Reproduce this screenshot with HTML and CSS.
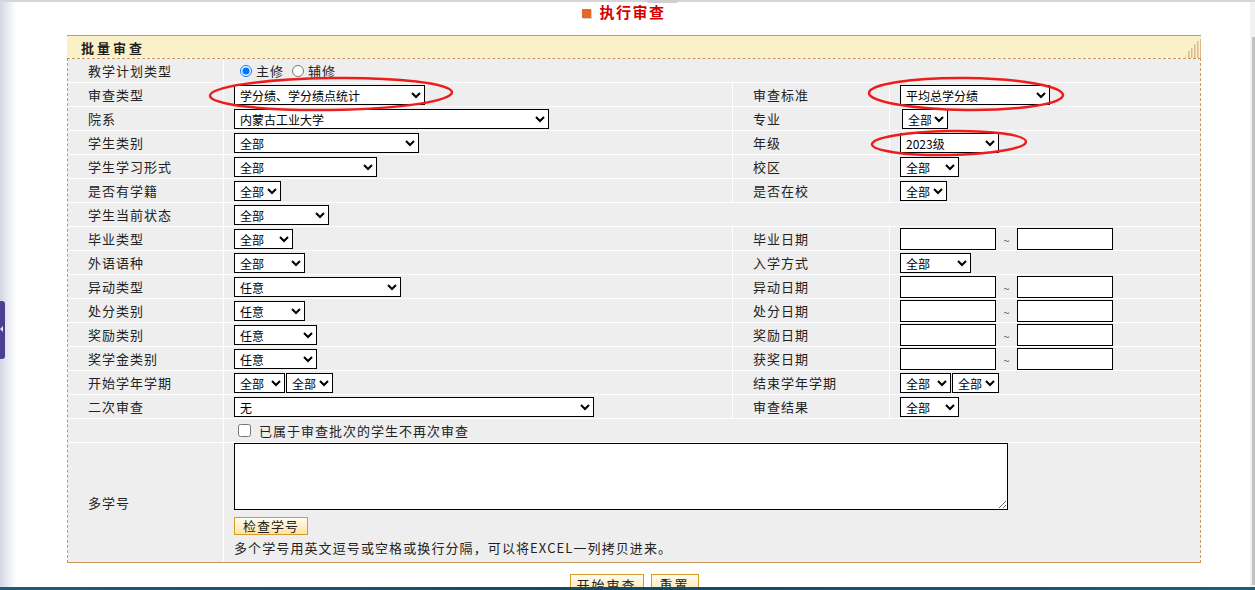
FILE: index.html
```html
<!DOCTYPE html>
<html lang="zh-CN">
<head>
<meta charset="utf-8">
<title>执行审查</title>
<link rel="stylesheet" href="styles.css">
</head>
<body>
<div class="topline"><span class="toptab"></span></div>
<div class="page">
  <div class="title"><span class="title-icon"></span><span class="title-text">执行审查</span></div>
  <div class="panel">
    <div class="panel-head">
      <span class="head-text">批量审查</span>
      <svg class="bars" width="17" height="19" viewBox="0 0 17 19">
        <rect x="1" y="16" width="1" height="3" fill="#efd9b0"/>
        <rect x="4" y="12" width="1.5" height="7" fill="#dcb98a"/>
        <rect x="7" y="9" width="1.5" height="10" fill="#dcb98a"/>
        <rect x="10" y="5" width="1.5" height="14" fill="#dcb98a"/>
        <rect x="13" y="2" width="1.5" height="17" fill="#dcb98a"/>
        <rect x="16" y="0" width="1" height="19" fill="#dcb98a"/>
      </svg>
    </div>
    <div class="panel-body">
      <div class="grid">
        <div class="lab">教学计划类型</div>
        <div class="val span3">
          <label class="opt"><input type="radio" name="plan" checked>主修</label>
          <label class="opt"><input type="radio" name="plan">辅修</label>
        </div>

        <div class="lab">审查类型</div>
        <div class="val"><select class="w191"><option>学分绩、学分绩点统计</option></select></div>
        <div class="lab">审查标准</div>
        <div class="val"><select class="w150"><option>平均总学分绩</option></select></div>

        <div class="lab">院系</div>
        <div class="val"><select class="w315"><option>内蒙古工业大学</option></select></div>
        <div class="lab">专业</div>
        <div class="val"><select class="w46 nudge"><option>全部</option></select></div>

        <div class="lab">学生类别</div>
        <div class="val"><select class="w185"><option>全部</option></select></div>
        <div class="lab">年级</div>
        <div class="val"><select class="w99"><option>2023级</option></select></div>

        <div class="lab">学生学习形式</div>
        <div class="val"><select class="w143"><option>全部</option></select></div>
        <div class="lab">校区</div>
        <div class="val"><select class="w59"><option>全部</option></select></div>

        <div class="lab">是否有学籍</div>
        <div class="val"><select class="w47"><option>全部</option></select></div>
        <div class="lab">是否在校</div>
        <div class="val"><select class="w47"><option>全部</option></select></div>

        <div class="lab">学生当前状态</div>
        <div class="val span3"><select class="w95"><option>全部</option></select></div>

        <div class="lab">毕业类型</div>
        <div class="val"><select class="w59"><option>全部</option></select></div>
        <div class="lab">毕业日期</div>
        <div class="val"><input class="date" type="text"><span class="tilde">~</span><input class="date" type="text"></div>

        <div class="lab">外语语种</div>
        <div class="val"><select class="w71"><option>全部</option></select></div>
        <div class="lab">入学方式</div>
        <div class="val"><select class="w71"><option>全部</option></select></div>

        <div class="lab">异动类型</div>
        <div class="val"><select class="w167"><option>任意</option></select></div>
        <div class="lab">异动日期</div>
        <div class="val"><input class="date" type="text"><span class="tilde">~</span><input class="date" type="text"></div>

        <div class="lab">处分类别</div>
        <div class="val"><select class="w71"><option>任意</option></select></div>
        <div class="lab">处分日期</div>
        <div class="val"><input class="date" type="text"><span class="tilde">~</span><input class="date" type="text"></div>

        <div class="lab">奖励类别</div>
        <div class="val"><select class="w83"><option>任意</option></select></div>
        <div class="lab">奖励日期</div>
        <div class="val"><input class="date" type="text"><span class="tilde">~</span><input class="date" type="text"></div>

        <div class="lab">奖学金类别</div>
        <div class="val"><select class="w83"><option>任意</option></select></div>
        <div class="lab">获奖日期</div>
        <div class="val"><input class="date" type="text"><span class="tilde">~</span><input class="date" type="text"></div>

        <div class="lab">开始学年学期</div>
        <div class="val pair"><select class="w51"><option>全部</option></select><select class="w47"><option>全部</option></select></div>
        <div class="lab">结束学年学期</div>
        <div class="val pair"><select class="w51"><option>全部</option></select><select class="w47"><option>全部</option></select></div>

        <div class="lab">二次审查</div>
        <div class="val"><select class="w360"><option>无</option></select></div>
        <div class="lab">审查结果</div>
        <div class="val"><select class="w59"><option>全部</option></select></div>

        <div class="lab"></div>
        <div class="val span3"><label class="chk"><input type="checkbox">已属于审查批次的学生不再次审查</label></div>

        <div class="lab">多学号</div>
        <div class="val span3 multi">
          <textarea class="ids"></textarea>
          <button class="btn btn-check" type="button">检查学号</button>
          <div class="hint">多个学号用英文逗号或空格或换行分隔，可以将EXCEL一列拷贝进来。</div>
        </div>
      </div>
    </div>
  </div>
  <div class="actions">
    <button class="btn btn-main btn-start" type="button">开始审查</button>
    <button class="btn btn-main btn-reset" type="button">重置</button>
  </div>
</div>

<svg class="marks" width="1255" height="590" viewBox="0 0 1255 590">
  <ellipse cx="331" cy="94" rx="121" ry="16" fill="none" stroke="#ee1c1c" stroke-width="2.5" transform="rotate(-0.8 331 94)"/>
  <ellipse cx="966" cy="94" rx="97" ry="16" fill="none" stroke="#ee1c1c" stroke-width="2.5" transform="rotate(0.6 966 94)"/>
  <ellipse cx="949" cy="143" rx="77" ry="12" fill="none" stroke="#ee1c1c" stroke-width="2.5" transform="rotate(-1 949 143)"/>
</svg>
<div class="leftstrip"><div class="sidetab"><span class="sidearrow"></span></div></div>
<div class="scrollbar"><div class="thumb"></div></div>
<div class="taskbar"></div>
</body>
</html>
```
FILE: styles.css
```css
html, body {
  margin: 0;
  padding: 0;
  background: #fff;
}
body {
  width: 1255px;
  height: 590px;
  overflow: hidden;
  font-family: "Noto Sans CJK SC", "Microsoft YaHei", sans-serif;
  font-size: 13px;
  color: #222;
  position: relative;
}
.topline {
  height: 2px;
  background: #d6d6d6;
  position: relative;
}
.toptab {
  position: absolute;
  left: 647px;
  top: 0;
  width: 31px;
  height: 3px;
  background: #cfcfcf;
  border-radius: 0 0 2px 2px;
}
.page {
  padding-left: 67px;
}
.title {
  width: 1134px;
  height: 20px;
  display: flex;
  align-items: center;
  justify-content: center;
  padding-right: 20px;
  box-sizing: border-box;
  margin-bottom: 13px;
}
.title-icon {
  width: 9px;
  height: 9px;
  background: #e2692a;
  box-shadow: 1px 1px 0 #d0d0d0;
  margin-right: 8px;
  margin-top: 2px;
}
.title-text {
  color: #d40000;
  font-weight: bold;
  font-size: 15px;
  letter-spacing: 1.5px;
  line-height: 20px;
}
.panel {
  width: 1134px;
}
.panel-head {
  height: 22px;
  border-top: 1px solid #c9975b;
  background: #fbf1c9;
  display: flex;
  align-items: center;
  padding-left: 14px;
}
.head-text {
  font-weight: bold;
  font-size: 13px;
  letter-spacing: 3px;
  color: #222;
}
.bars {
  margin-left: auto;
  align-self: flex-end;
  display: block;
}
.panel-body {
  border: 1px dashed #c9975b;
  border-bottom: 1px solid #c9975b;
}
.grid {
  display: grid;
  grid-template-columns: 155px 508px 156px 310px;
  grid-template-rows: repeat(16, 23px) 119px;
  gap: 1px;
  background: #fff;
}
.lab, .val {
  background: #eeeeee;
  display: flex;
  align-items: center;
}
.lab {
  padding-left: 20px;
  letter-spacing: 1px;
  white-space: nowrap;
}
.val {
  padding-left: 10px;
}
.span3 {
  grid-column: span 3;
}
select {
  height: 20px;
  box-sizing: border-box;
  border: 1px solid #000;
  border-radius: 0;
  background: #fff;
  color: #000;
  font-family: "Noto Sans CJK SC", "Microsoft YaHei", sans-serif;
  font-size: 12px;
  padding: 0 0 0 1px;
  margin: 0;
}
.nudge { margin-left: 2px; }
.pair select + select { margin-left: 1px; }
.w191 { width: 191px; }
.w150 { width: 150px; }
.w315 { width: 315px; }
.w46 { width: 46px; }
.w185 { width: 185px; }
.w99 { width: 99px; }
.w143 { width: 143px; }
.w59 { width: 59px; }
.w47 { width: 47px; }
.w95 { width: 95px; }
.w71 { width: 71px; }
.w167 { width: 167px; }
.w83 { width: 83px; }
.w51 { width: 51px; }
.w360 { width: 360px; }
.date {
  width: 96px;
  height: 22px;
  box-sizing: border-box;
  border: 1px solid #000;
  margin: 0;
  padding: 0 2px;
  background: #fff;
}
.tilde {
  width: 21px;
  text-align: center;
  color: #555;
  font-size: 11px;
  padding-top: 3px;
}
.opt {
  display: flex;
  align-items: center;
  letter-spacing: 1px;
  margin-right: 2px;
}
.opt input {
  margin: 0 4px 0 6px;
  width: 12px;
  height: 12px;
}
.chk {
  display: flex;
  align-items: center;
  letter-spacing: 1px;
}
.chk input {
  width: 13px;
  height: 13px;
  margin: 0 8px 0 4px;
}
.multi {
  flex-direction: column;
  align-items: flex-start;
  justify-content: flex-start;
}
.ids {
  width: 774px;
  height: 67px;
  box-sizing: border-box;
  border: 1px solid #000;
  margin: 0;
  padding: 2px;
  background: #fff;
}
.btn {
  font-family: "Noto Sans CJK SC", "Microsoft YaHei", sans-serif;
  font-size: 13px;
  letter-spacing: 1px;
  color: #222;
  border: 1px solid #d89b2a;
  background: linear-gradient(#fffdf2, #fbe3a2);
  border-radius: 0;
  padding: 0;
  margin: 0;
  line-height: 16px;
  white-space: nowrap;
}
.btn-check {
  width: 74px;
  height: 18px;
  margin-top: 7px;
}
.hint {
  margin-top: 5px;
  letter-spacing: 1.1px;
  line-height: 16px;
  white-space: nowrap;
}
.actions {
  width: 1134px;
  display: flex;
  justify-content: center;
  gap: 7px;
  margin-top: 11px;
}
.btn-main {
  height: 21px;
  padding: 0;
  letter-spacing: 2px;
  text-align: center;
}
.btn-start { width: 74px; }
.btn-reset { width: 48px; }
.marks {
  position: absolute;
  left: 0;
  top: 0;
  pointer-events: none;
}
.leftstrip {
  position: absolute;
  left: 0;
  top: 2px;
  width: 16px;
  height: 585px;
  background: linear-gradient(to right, #d3d7e4, #eef0f5 60%, #ffffff);
}
.sidetab {
  position: absolute;
  left: 0;
  top: 299px;
  width: 5px;
  height: 58px;
  background: #4d3f91;
  border-radius: 0 3px 3px 0;
}
.sidearrow {
  position: absolute;
  left: 0;
  top: 25px;
  width: 0;
  height: 0;
  border-top: 3px solid transparent;
  border-bottom: 3px solid transparent;
  border-right: 3px solid #e8e8f4;
}
.scrollbar {
  position: absolute;
  left: 1250px;
  top: 2px;
  width: 5px;
  height: 585px;
  background: #f1f1f1;
}
.thumb {
  position: absolute;
  left: 2px;
  top: 35px;
  width: 3px;
  height: 548px;
  background: #c1c1c1;
}
.taskbar {
  position: absolute;
  left: 0;
  top: 587px;
  width: 1255px;
  height: 3px;
  background: linear-gradient(to right, #1c5d7c, #0f4b66 50%, #1b5f80);
}
```
